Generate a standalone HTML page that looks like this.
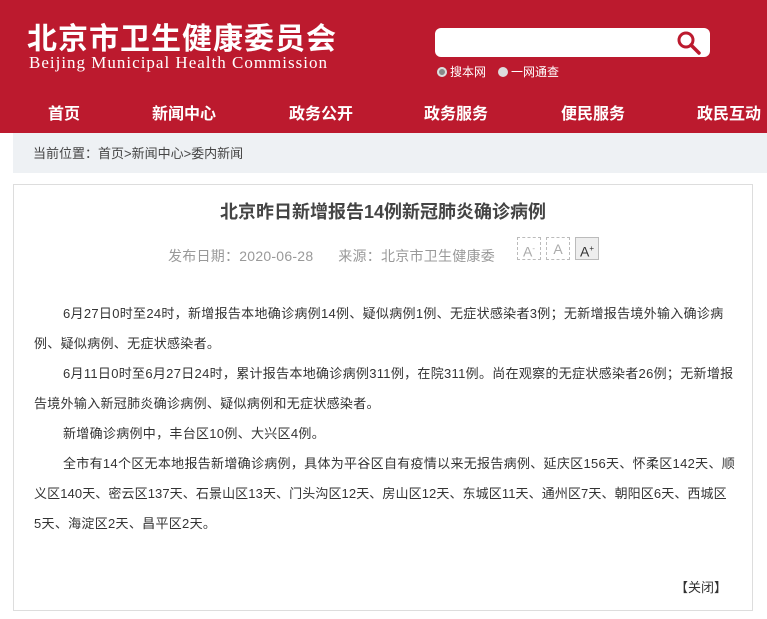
<!DOCTYPE html>
<html><head><meta charset="utf-8"><style>
*{margin:0;padding:0;box-sizing:border-box}
body{width:767px;height:619px;overflow:hidden;background:#fff;font-family:"Liberation Sans","Noto Sans CJK SC",sans-serif;position:relative}
.hd{position:absolute;left:0;top:0;width:767px;height:133px;background:#bc1a2e;color:#fff}
.t1{position:absolute;left:27px;top:18px;font-size:30px;font-weight:bold;letter-spacing:1px;font-family:"Noto Sans CJK SC",sans-serif;line-height:36px}
.t2{position:absolute;left:29px;top:53px;font-size:17px;letter-spacing:1px;font-family:"Liberation Serif",serif;line-height:20px}
.sb{position:absolute;left:435px;top:28px;width:275px;height:29px;background:#fff;border-radius:6px}
.rad{position:absolute;top:64px;font-size:12px;line-height:16px}
.rad i{display:inline-block;width:10px;height:10px;border-radius:50%;background:#ddd;vertical-align:-1px;margin-right:3px}
.nav{position:absolute;top:104px;font-size:16px;font-weight:bold;line-height:22px}
.bc{position:absolute;left:13px;top:133px;width:754px;height:40px;background:#eef1f4;font-size:13px;color:#444;padding:13px 0 0 20px;line-height:16px}
.card{position:absolute;left:13px;top:184px;width:740px;height:427px;border:1px solid #ddd}
h1{position:absolute;left:0;width:738px;top:14px;text-align:center;font-size:18px;color:#444;line-height:26px}
.meta{position:absolute;left:154px;top:61px;font-size:14px;letter-spacing:0.25px;color:#999;line-height:20px}
.fb{position:absolute;top:52px;width:24px;height:23px;border:1px dashed #bbb;font-size:14px;color:#aaa;text-align:center;line-height:22px}
.txt{position:absolute;left:20px;top:114px;width:720px;font-size:13px;letter-spacing:0.3px;color:#333;line-height:30px;white-space:nowrap}
.txt .i{padding-left:29px}
.cl{position:absolute;right:25px;top:392px;font-size:13px;color:#333}
</style></head><body>
<div class="hd">
<div class="t1">北京市卫生健康委员会</div>
<div class="t2">Beijing Municipal Health Commission</div>
<div class="sb"><svg style="position:absolute;right:8px;top:2px" width="26" height="26" viewBox="0 0 26 26"><circle cx="10" cy="10" r="7" fill="none" stroke="#bc1a2e" stroke-width="3"/><line x1="15" y1="15" x2="23" y2="23" stroke="#bc1a2e" stroke-width="3.5" stroke-linecap="round"/></svg></div>
<div class="rad" style="left:437px"><i style="background:#888;box-shadow:inset 0 0 0 2px #ddd"></i>搜本网</div>
<div class="rad" style="left:498px"><i></i>一网通查</div>
<div class="nav" style="left:48px">首页</div>
<div class="nav" style="left:152px">新闻中心</div>
<div class="nav" style="left:289px">政务公开</div>
<div class="nav" style="left:424px">政务服务</div>
<div class="nav" style="left:561px">便民服务</div>
<div class="nav" style="left:697px">政民互动</div>
</div>
<div class="bc">当前位置：首页&gt;新闻中心&gt;委内新闻</div>
<div class="card">
<h1>北京昨日新增报告14例新冠肺炎确诊病例</h1>
<div class="meta">发布日期：2020-06-28 &nbsp; &nbsp; &nbsp;来源：北京市卫生健康委</div>
<div class="fb" style="left:503px">A<sup style="font-size:8px">-</sup></div>
<div class="fb" style="left:532px">A</div>
<div class="fb" style="left:561px;border:1px solid #bbb;background:#eee;color:#333">A<sup style="font-size:8px">+</sup></div>
<div class="txt">
<div class="i">6月27日0时至24时，新增报告本地确诊病例14例、疑似病例1例、无症状感染者3例；无新增报告境外输入确诊病</div>
<div>例、疑似病例、无症状感染者。</div>
<div class="i">6月11日0时至6月27日24时，累计报告本地确诊病例311例，在院311例。尚在观察的无症状感染者26例；无新增报</div>
<div>告境外输入新冠肺炎确诊病例、疑似病例和无症状感染者。</div>
<div class="i">新增确诊病例中，丰台区10例、大兴区4例。</div>
<div class="i">全市有14个区无本地报告新增确诊病例，具体为平谷区自有疫情以来无报告病例、延庆区156天、怀柔区142天、顺</div>
<div style="letter-spacing:0.1px">义区140天、密云区137天、石景山区13天、门头沟区12天、房山区12天、东城区11天、通州区7天、朝阳区6天、西城区</div>
<div>5天、海淀区2天、昌平区2天。</div>
</div>
<div class="cl">【关闭】</div>
</div>
</body></html>
